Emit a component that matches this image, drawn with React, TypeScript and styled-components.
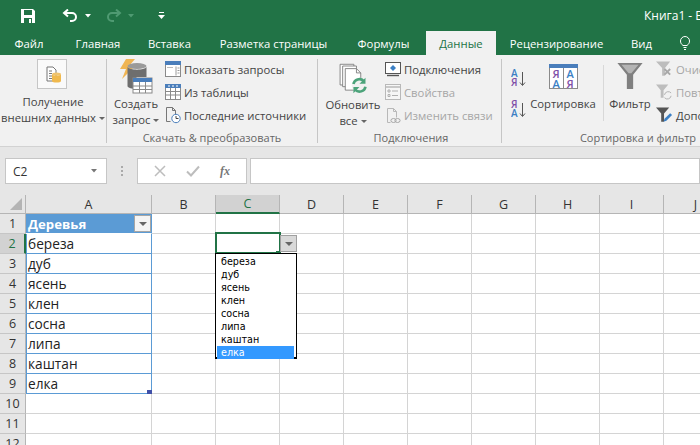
import styled, { createGlobalStyle } from 'styled-components';

const GlobalStyle = createGlobalStyle`
  html, body {
    margin: 0;
    padding: 0;
    background: #fff;
  }
  * {
    box-sizing: border-box;
  }
`;

const font = `"Open Sans", "Noto Sans", sans-serif`;
const green = '#217346';
const tableBlue = '#5b9bd5';

const Page = styled.div`
  width: 700px;
  height: 445px;
  overflow: hidden;
  display: flex;
  flex-direction: column;
  font-family: ${font};
  background: #fff;
`;

const TitleBar = styled.div`
  height: 31px;
  flex: none;
  background: ${green};
  display: flex;
  align-items: center;
  padding-left: 20px;
  color: #fff;
`;

const Qat = styled.div`
  display: flex;
  align-items: center;
  flex: none;
  width: 624px;
`;

const QatGap = styled.span<{ $w: number }>`
  display: inline-block;
  flex: none;
  width: ${p => p.$w}px;
`;

const Title = styled.div`
  font-size: 12px;
  white-space: nowrap;
`;

const Tabs = styled.div`
  height: 24px;
  flex: none;
  background: ${green};
  display: flex;
`;

const Tab = styled.div<{ $active?: boolean; $w: number; $pr?: number }>`
  width: ${p => p.$w}px;
  flex: none;
  display: flex;
  align-items: center;
  justify-content: center;
  padding-right: ${p => p.$pr ?? 0}px;
  font-size: 11.3px;
  white-space: nowrap;
  background: ${p => (p.$active ? '#f1f1f1' : 'transparent')};
  color: ${p => (p.$active ? green : '#fff')};
`;

const Ribbon = styled.div`
  height: 92px;
  flex: none;
  background: #f1f1f1;
  border-bottom: 1px solid #d2d2d2;
  display: flex;
  color: #444;
`;

const Group = styled.div<{ $w: number; $last?: boolean; $pl?: number }>`
  width: ${p => p.$w}px;
  flex: none;
  margin: 4px 0 3px;
  padding-left: ${p => p.$pl ?? 0}px;
  border-right: ${p => (p.$last ? 'none' : '1px solid #c6c6c6')};
  display: flex;
  flex-direction: column;
`;

const GroupBody = styled.div`
  flex: 1;
  display: flex;
  min-height: 0;
`;

const GroupLabel = styled.div`
  height: 10px;
  flex: none;
  text-align: center;
  font-size: 11px;
  line-height: 10px;
  color: #666;
  white-space: nowrap;
`;

const LargeButton = styled.div<{ $w: number }>`
  width: ${p => p.$w}px;
  flex: none;
  display: flex;
  flex-direction: column;
  align-items: center;
  font-size: 11.3px;
  line-height: 16px;
  color: #444;
  white-space: nowrap;
`;

const IconSlot = styled.div<{ $h: number; $pt?: number; $pr?: number }>`
  height: ${p => p.$h}px;
  flex: none;
  padding-top: ${p => p.$pt ?? 0}px;
  padding-right: ${p => p.$pr ?? 0}px;
  display: flex;
  align-items: flex-start;
  justify-content: center;
`;

const Caret = styled.span`
  display: inline-block;
  width: 0;
  height: 0;
  margin-left: 3px;
  vertical-align: 2px;
  border-left: 3px solid transparent;
  border-right: 3px solid transparent;
  border-top: 3px solid #666;
`;

const SmallList = styled.div`
  display: flex;
  flex-direction: column;
  gap: 5px;
  padding-top: 1px;
`;

const SmallItem = styled.div<{ $off?: boolean }>`
  height: 18px;
  display: flex;
  align-items: center;
  gap: 3px;
  font-size: 11.3px;
  white-space: nowrap;
  color: ${p => (p.$off ? '#a6a6a6' : '#444')};
`;

const SortColumn = styled.div`
  width: 26px;
  flex: none;
  display: flex;
  flex-direction: column;
  gap: 13px;
  padding: 10px 0 0 9px;
`;

const VLine = styled.div`
  width: 1px;
  height: 56px;
  margin: 6px 0 0 5px;
  flex: none;
  background: #d8d8d8;
`;

const FormulaRow = styled.div`
  height: 48px;
  flex: none;
  background: #e6e6e6;
  display: flex;
  align-items: flex-start;
  padding: 11px 0 0 5px;
`;

const NameBox = styled.div`
  width: 102px;
  height: 26px;
  flex: none;
  background: #fff;
  border: 1px solid #c6c6c6;
  display: flex;
  align-items: center;
  justify-content: space-between;
  padding: 0 9px 0 7px;
  font-size: 12px;
  color: #333;
`;

const Grip = styled.div`
  width: 30px;
  height: 26px;
  flex: none;
  display: flex;
  flex-direction: column;
  align-items: center;
  justify-content: center;
  gap: 2px;
  i {
    width: 2px;
    height: 2px;
    background: #aaa;
  }
`;

const FxBox = styled.div`
  width: 110px;
  height: 26px;
  flex: none;
  background: #fff;
  border: 1px solid #c6c6c6;
  display: flex;
  align-items: center;
  justify-content: space-around;
  padding: 0 6px;
`;

const FormulaInput = styled.div`
  flex: 1;
  height: 26px;
  margin-left: 3px;
  background: #fff;
  border: 1px solid #c6c6c6;
`;

const Sheet = styled.div`
  flex: 1;
  position: relative;
  display: grid;
  grid-template-columns: 26px 126px repeat(9, 64px);
  grid-auto-rows: 20px;
  grid-template-rows: 19px;
  overflow: hidden;
  font-size: 13.7px;
  color: #222;
`;

const Corner = styled.div`
  background: #e6e6e6;
  border-right: 1px solid #b5b5b5;
  border-bottom: 1px solid #b5b5b5;
  position: relative;
  &::after {
    content: '';
    position: absolute;
    right: 3px;
    bottom: 3px;
    width: 0;
    height: 0;
    border-left: 12px solid transparent;
    border-bottom: 12px solid #b4b4b4;
  }
`;

const ColHead = styled.div<{ $on?: boolean }>`
  background: ${p => (p.$on ? '#d2d2d2' : '#e6e6e6')};
  color: ${p => (p.$on ? green : '#333')};
  border-right: 1px solid #b5b5b5;
  border-bottom: ${p => (p.$on ? `2px solid ${green}` : '1px solid #b5b5b5')};
  display: flex;
  align-items: center;
  justify-content: center;
  font-size: 12.5px;
`;

const RowHead = styled.div<{ $on?: boolean }>`
  background: ${p => (p.$on ? '#d2d2d2' : '#e6e6e6')};
  color: ${p => (p.$on ? green : '#333')};
  border-bottom: 1px solid #c6c6c6;
  border-right: ${p => (p.$on ? `2px solid ${green}` : '1px solid #b5b5b5')};
  display: flex;
  align-items: center;
  justify-content: center;
  font-size: 12.5px;
`;

const Cell = styled.div`
  background: #fff;
  border-right: 1px solid #d4d4d4;
  border-bottom: 1px solid #d4d4d4;
`;

const HeaderCell = styled.div`
  background: ${tableBlue};
  color: #fff;
  font-weight: 700;
  font-size: 13.2px;
  display: flex;
  align-items: center;
  justify-content: space-between;
  padding-left: 2px;
  border-right: 1px solid ${tableBlue};
  border-bottom: 1px solid #fff;
`;

const FilterButton = styled.div`
  width: 17px;
  height: 17px;
  background: #f4f4f4;
  border: 1px solid #a6a6a6;
  display: flex;
  align-items: center;
  justify-content: center;
`;

const FilterCaret = styled.span`
  width: 0;
  height: 0;
  border-left: 4px solid transparent;
  border-right: 4px solid transparent;
  border-top: 4px solid #666;
`;

const DataCell = styled.div`
  position: relative;
  background: #fff;
  display: flex;
  align-items: center;
  padding-left: 1px;
  white-space: nowrap;
  border-left: 1px solid ${tableBlue};
  border-right: 1px solid ${tableBlue};
  border-bottom: 1px solid ${tableBlue};
`;

const TableHandle = styled.span`
  position: absolute;
  right: -1px;
  bottom: -1px;
  width: 5px;
  height: 4px;
  background: #4050a8;
`;

const Selection = styled.div`
  position: absolute;
  left: 215px;
  top: 37px;
  width: 66px;
  height: 22px;
  border: 2px solid ${green};
  &::after {
    content: '';
    position: absolute;
    right: -2px;
    bottom: -3px;
    width: 5px;
    height: 4px;
    background: ${green};
  }
`;

const DropButton = styled.div`
  position: absolute;
  left: 280px;
  top: 40px;
  width: 17px;
  height: 17px;
  background: #d9d9d9;
  border: 1px solid #a0a0a0;
  display: flex;
  align-items: center;
  justify-content: center;
`;

const DropList = styled.div`
  position: absolute;
  left: 215px;
  top: 58px;
  width: 82px;
  height: 106px;
  padding: 1px 1px 0 1px;
  background: #fff;
  border: 1px solid #000;
  border-bottom-width: 2px;
  font-family: "DejaVu Sans", sans-serif;
  font-size: 9.6px;
`;

const DropItem = styled.div<{ $on?: boolean }>`
  height: 13px;
  line-height: 13px;
  padding-left: 4px;
  margin-right: 1px;
  color: ${p => (p.$on ? '#fff' : '#000')};
  background: ${p => (p.$on ? '#3399ff' : 'transparent')};
`;

const SaveIcon = () => (
  <svg width="16" height="16" viewBox="0 0 16 16">
    <path d="M1 1h12l2 2v12H1z" fill="#fff" />
    <rect x="4" y="2" width="8" height="5" fill={green} />
    <rect x="4" y="10" width="8" height="5" fill={green} />
    <rect x="9" y="11" width="2" height="4" fill="#fff" />
  </svg>
);

const UndoIcon = ({ off }: { off?: boolean }) => {
  const c = off ? '#4f9a72' : '#fff';
  return (
    <svg width="16" height="14" viewBox="0 0 16 14" fill="none">
      <g transform={off ? 'matrix(-1 0 0 1 16 0)' : undefined}>
        <path d="M3 4h7a4 4 0 0 1 0 8H8" stroke={c} strokeWidth="2" />
        <path d="M6 0.5 2 4l4 3.5" stroke={c} strokeWidth="2" />
      </g>
    </svg>
  );
};

const TinyCaret = ({ color }: { color: string }) => (
  <svg width="6" height="4" viewBox="0 0 6 4">
    <path d="M0 0h6L3 3.5z" fill={color} />
  </svg>
);

const CustomizeIcon = () => (
  <svg width="7" height="8" viewBox="0 0 7 8">
    <rect x="1" y="0" width="5" height="1" fill="#fff" />
    <path d="M0 3h7L3.5 7z" fill="#fff" />
  </svg>
);

const ExternalDataIcon = () => (
  <svg width="30" height="30" viewBox="0 0 30 30">
    <rect x="0.5" y="0.5" width="29" height="29" fill="#fafafa" stroke="#c6c6c6" />
    <path d="M10 8h6l3 3v11H10z" fill="#fff" stroke="#777" />
    <path d="M12 12h3M12 14.5h3M12 17h3M12 19.5h3" stroke="#777" />
    <ellipse cx="19.5" cy="15" rx="4.5" ry="1.6" fill="#f0c36d" />
    <path d="M15 15v7c0 2 9 2 9 0v-7c0 2-9 2-9 0z" fill="#f0b94e" />
  </svg>
);

const QueryIcon = () => (
  <svg width="34" height="35" viewBox="0 0 34 35">
    <path d="M7 0h9l-6 7h6L3 20l4-10H1z" fill="#f0b553" />
    <ellipse cx="18" cy="7" rx="9.5" ry="3" fill="#9a9a9a" />
    <path d="M8.5 8c2 3.5 17 3.5 19 0v10h-10v12c-4 0-9-1-9-3z" fill="#6e6e6e" />
    <rect x="14" y="19" width="19" height="15" fill="#fff" stroke="#8a8a8a" />
    <rect x="14" y="19" width="19" height="4" fill="#4a7ebb" />
    <path d="M20.5 23v11M26.5 23v11M14 27h19M14 30.5h19" stroke="#8a8a8a" />
  </svg>
);

const QueriesIcon = () => (
  <svg width="16" height="16" viewBox="0 0 16 16">
    <rect x="0.5" y="0.5" width="15" height="15" fill="#fff" stroke="#8a8a8a" />
    <rect x="0" y="0" width="16" height="4" fill="#4a7ebb" />
    <path d="M11 5.5v9" stroke="#9a9a9a" />
    <path d="M12.5 7h2M12.5 9.5h2M12.5 12h2" stroke="#9a9a9a" />
    <path d="M2 6.5h6" stroke="#bbb" />
  </svg>
);

const FromTableIcon = () => (
  <svg width="16" height="16" viewBox="0 0 16 16">
    <rect x="0.5" y="0.5" width="15" height="15" fill="#fff" stroke="#8a8a8a" />
    <rect x="0" y="0" width="16" height="4" fill="#4a7ebb" />
    <path d="M3 2h2M7 2h2M11 2h2" stroke="#fff" />
    <path d="M5.5 4v11M10.5 4v11M0 7.5h16M0 11h16" stroke="#8a8a8a" />
  </svg>
);

const RecentIcon = () => (
  <svg width="16" height="18" viewBox="0 0 16 18" fill="none">
    <path d="M1.500 1.500h6l3 3v5M1.500 1.500v14h4" stroke="#777" />
    <path d="M7.500 1.500v3h3" stroke="#777" />
    <circle cx="11" cy="12.500" r="4.200" fill="#fff" stroke="#4a7ebb" />
    <path d="M11 10v2.500h2.500" stroke="#444" />
  </svg>
);

const RefreshIcon = () => (
  <svg width="30" height="31" viewBox="0 0 33 36" fill="none">
    <path d="M1.500 1.500h16v24h-16z" fill="#fff" stroke="#777" />
    <path d="M4.500 3.500h16v24h-16z" fill="#fff" stroke="#777" />
    <path d="M7.500 6.500h13l5 5v20h-18z" fill="#fff" stroke="#777" />
    <path d="M20.500 6.500v5h5" stroke="#777" />
    <circle cx="24" cy="26" r="9" fill="#f1f1f1" />
    <path d="M17 24.500a7 7 0 0 1 12-3.500" stroke="#4ca37a" strokeWidth="3" />
    <path d="M31 27.500a7 7 0 0 1-12 3.500" stroke="#4ca37a" strokeWidth="3" />
    <path d="M31 17v7h-7zM17 35v-7h7z" fill="#4ca37a" />
  </svg>
);

const ConnectionsIcon = () => (
  <svg width="16" height="15" viewBox="0 0 16 15" fill="none">
    <rect x="0.500" y="0.500" width="15" height="11" fill="#fff" stroke="#555" />
    <path d="M8 3l3 3-3 3-3-3z" fill="#3b7fc4" />
    <path d="M2 13.500h12" stroke="#555" strokeWidth="1.400" />
  </svg>
);

const PropsIcon = () => (
  <svg width="16" height="16" viewBox="0 0 16 16" fill="none">
    <rect x="0.500" y="0.500" width="15" height="15" fill="#f6f6f6" stroke="#b8b8b8" />
    <path d="M0 3h16" stroke="#b8b8b8" strokeWidth="1.500" />
    <path d="M3 6h2v2H3zM3 10.500h2v2H3z" stroke="#b0b0b0" />
    <path d="M7 7h6M7 11.500h6" stroke="#b0b0b0" />
  </svg>
);

const LinksIcon = () => (
  <svg width="16" height="17" viewBox="0 0 16 17" fill="none">
    <path d="M2.500 1.500h6l3 3v6M2.500 1.500v14h3" stroke="#b8b8b8" />
    <path d="M8.500 1.500v3h3" stroke="#b8b8b8" />
    <ellipse cx="8.500" cy="13.500" rx="2.600" ry="2" stroke="#a8a8a8" />
    <ellipse cx="12.500" cy="13.500" rx="2.600" ry="2" stroke="#a8a8a8" />
  </svg>
);

const SortLetter = styled.text`
  font-family: "Open Sans", sans-serif;
  font-weight: 600;
`;

const SortAz = ({ down }: { down?: boolean }) => (
  <svg width="15" height="18" viewBox="0 0 15 18" fill="none">
    <SortLetter x="0" y="8" fontSize="10" fill={down ? '#7f4fa8' : '#3b7fc4'}>
      {down ? 'Я' : 'А'}
    </SortLetter>
    <SortLetter x="0" y="16.500" fontSize="10" fill={down ? '#3b7fc4' : '#7f4fa8'}>
      {down ? 'А' : 'Я'}
    </SortLetter>
    <path d="M11.500 3v13M9 13.500l2.500 3 2.500-3" stroke="#555" />
  </svg>
);

const SortBigIcon = () => (
  <svg width="29" height="25" viewBox="0 0 29 25" fill="none">
    <rect x="0.500" y="0.500" width="28" height="24" fill="#fff" stroke="#8a8a8a" />
    <rect x="0" y="0" width="29" height="4" fill="#4a7ebb" />
    <path d="M14.500 4v21" stroke="#8a8a8a" />
    <SortLetter x="3.500" y="13.500" fontSize="11" fill="#7f4fa8">Я</SortLetter>
    <SortLetter x="17.500" y="13.500" fontSize="11" fill="#3b7fc4">А</SortLetter>
    <SortLetter x="3.500" y="23.500" fontSize="11" fill="#3b7fc4">А</SortLetter>
    <SortLetter x="17.500" y="23.500" fontSize="11" fill="#7f4fa8">Я</SortLetter>
  </svg>
);

const FunnelIcon = () => (
  <svg width="28" height="27" viewBox="0 0 28 30">
    <path d="M0 0h28L17.500 13v16h-7V13z" fill="#808080" />
    <path d="M4.500 2h19L15.500 11.500h-3z" fill="#b4b4b4" />
  </svg>
);

const ClearIcon = () => (
  <svg width="17" height="17" viewBox="0 0 18 17" fill="none">
    <path d="M0 0h15L9.500 7v8h-3V7z" fill="#bdbdbd" />
    <path d="M9 8l6 6M15 8l-6 6" stroke="#a8a8a8" strokeWidth="2" />
  </svg>
);

const ReapplyIcon = () => (
  <svg width="17" height="17" viewBox="0 0 18 17" fill="none">
    <path d="M0 0h13L8 6v8H5V6z" fill="#bdbdbd" />
    <path d="M9 11a4 4 0 0 1 7-2M16 12a4 4 0 0 1-7 2" stroke="#b0b0b0" />
  </svg>
);

const AdvancedIcon = () => (
  <svg width="17" height="17" viewBox="0 0 18 17" fill="none">
    <path d="M0 0h14L8.500 6.500V15h-3V6.500z" fill="#555" />
    <path d="M8 15l1-3 6-6 2 2-6 6z" fill="#3b7fc4" />
  </svg>
);

const CancelGlyph = () => (
  <svg width="12" height="12" viewBox="0 0 12 12" fill="none">
    <path d="M1 1l10 10M11 1 1 11" stroke="#bdbdbd" strokeWidth="1.500" />
  </svg>
);

const CheckGlyph = () => (
  <svg width="14" height="12" viewBox="0 0 14 12" fill="none">
    <path d="M1 6.500 5 10.500 13 1.500" stroke="#bdbdbd" strokeWidth="2" />
  </svg>
);

const FxGlyph = styled.span`
  font-family: "Liberation Serif", serif;
  font-style: italic;
  font-weight: 700;
  font-size: 12px;
  color: #777;
`;

const LightBulb = () => (
  <svg width="10" height="14" viewBox="0 0 10 14" fill="none">
    <path d="M3 9.500C1 8 .5 6.500.5 5a4.500 4.500 0 0 1 9 0c0 1.500-.5 3-2.500 4.500zM3.500 11.500h3M4 13.500h2" stroke="#fff" />
  </svg>
);

const BulbCell = styled.div`
  flex: none;
  width: 24px;
  display: flex;
  align-items: center;
  justify-content: center;
  margin-left: 7px;
`;

const columns = ['A', 'B', 'C', 'D', 'E', 'F', 'G', 'H', 'I', 'J'];
const trees = ['береза', 'дуб', 'ясень', 'клен', 'сосна', 'липа', 'каштан', 'елка'];
const rowNumbers = [1, 2, 3, 4, 5, 6, 7, 8, 9, 10, 11, 12];
const blankColumns = columns.slice(1);

const Row = ({ n }: { n: number }) => (
  <>
    <RowHead $on={n === 2}>{n}</RowHead>
    {n === 1 && (
      <HeaderCell>
        Деревья
        <FilterButton><FilterCaret /></FilterButton>
      </HeaderCell>
    )}
    {n >= 2 && n <= 9 && (
      <DataCell>
        {trees[n - 2]}
        {n === 9 && <TableHandle />}
      </DataCell>
    )}
    {n > 9 && <Cell />}
    {blankColumns.map(c => (
      <Cell key={c} />
    ))}
  </>
);

export default function App() {
  return (
    <Page>
      <GlobalStyle />
      <TitleBar>
        <Qat>
          <SaveIcon />
          <QatGap $w={26} />
          <UndoIcon />
          <QatGap $w={7} />
          <TinyCaret color="#fff" />
          <QatGap $w={15} />
          <UndoIcon off />
          <QatGap $w={6} />
          <TinyCaret color="#4f9a72" />
          <QatGap $w={24} />
          <CustomizeIcon />
        </Qat>
        <Title>Книга1 - Excel</Title>
      </TitleBar>
      <Tabs>
        <Tab $w={58}>Файл</Tab>
        <Tab $w={80}>Главная</Tab>
        <Tab $w={63}>Вставка</Tab>
        <Tab $w={145}>Разметка страницы</Tab>
        <Tab $w={80} $pr={5}>Формулы</Tab>
        <Tab $w={70} $active>Данные</Tab>
        <Tab $w={121}>Рецензирование</Tab>
        <Tab $w={49}>Вид</Tab>
        <BulbCell><LightBulb /></BulbCell>
      </Tabs>
      <Ribbon>
        <Group $w={107}>
          <GroupBody>
            <LargeButton $w={106}>
              <IconSlot $h={35} $pr={2}><ExternalDataIcon /></IconSlot>
              <div>Получение</div>
              <div>внешних данных<Caret /></div>
            </LargeButton>
          </GroupBody>
        </Group>
        <Group $w={211}>
          <GroupBody>
            <LargeButton $w={58}>
              <IconSlot $h={37}><QueryIcon /></IconSlot>
              <div>Создать</div>
              <div>запрос<Caret /></div>
            </LargeButton>
            <SmallList>
              <SmallItem><QueriesIcon />Показать запросы</SmallItem>
              <SmallItem><FromTableIcon />Из таблицы</SmallItem>
              <SmallItem><RecentIcon />Последние источники</SmallItem>
            </SmallList>
          </GroupBody>
          <GroupLabel>Скачать &amp; преобразовать</GroupLabel>
        </Group>
        <Group $w={184} $pl={3}>
          <GroupBody>
            <LargeButton $w={64}>
              <IconSlot $h={38} $pt={4}><RefreshIcon /></IconSlot>
              <div>Обновить</div>
              <div>все<Caret /></div>
            </LargeButton>
            <SmallList>
              <SmallItem><ConnectionsIcon />Подключения</SmallItem>
              <SmallItem $off><PropsIcon />Свойства</SmallItem>
              <SmallItem $off><LinksIcon />Изменить связи</SmallItem>
            </SmallList>
          </GroupBody>
          <GroupLabel>Подключения</GroupLabel>
        </Group>
        <Group $w={272} $last>
          <GroupBody>
            <SortColumn>
              <SortAz />
              <SortAz down />
            </SortColumn>
            <LargeButton $w={70}>
              <IconSlot $h={37} $pt={5}><SortBigIcon /></IconSlot>
              <div>Сортировка</div>
            </LargeButton>
            <VLine />
            <LargeButton $w={52}>
              <IconSlot $h={37} $pt={4}><FunnelIcon /></IconSlot>
              <div>Фильтр</div>
            </LargeButton>
            <SmallList>
              <SmallItem $off><ClearIcon />Очистить</SmallItem>
              <SmallItem $off><ReapplyIcon />Повторить</SmallItem>
              <SmallItem><AdvancedIcon />Дополнительно</SmallItem>
            </SmallList>
          </GroupBody>
          <GroupLabel>Сортировка и фильтр</GroupLabel>
        </Group>
      </Ribbon>
      <FormulaRow>
        <NameBox>C2<TinyCaret color="#777" /></NameBox>
        <Grip><i /><i /><i /></Grip>
        <FxBox>
          <CancelGlyph />
          <CheckGlyph />
          <FxGlyph>fx</FxGlyph>
        </FxBox>
        <FormulaInput />
      </FormulaRow>
      <Sheet>
        <Corner />
        {columns.map(c => (
          <ColHead key={c} $on={c === 'C'}>{c}</ColHead>
        ))}
        {rowNumbers.map(n => (
          <Row key={n} n={n} />
        ))}
        <Selection />
        <DropButton><FilterCaret /></DropButton>
        <DropList>
          {trees.map((t, i) => (
            <DropItem key={t} $on={i === trees.length - 1}>{t}</DropItem>
          ))}
        </DropList>
      </Sheet>
    </Page>
  );
}
